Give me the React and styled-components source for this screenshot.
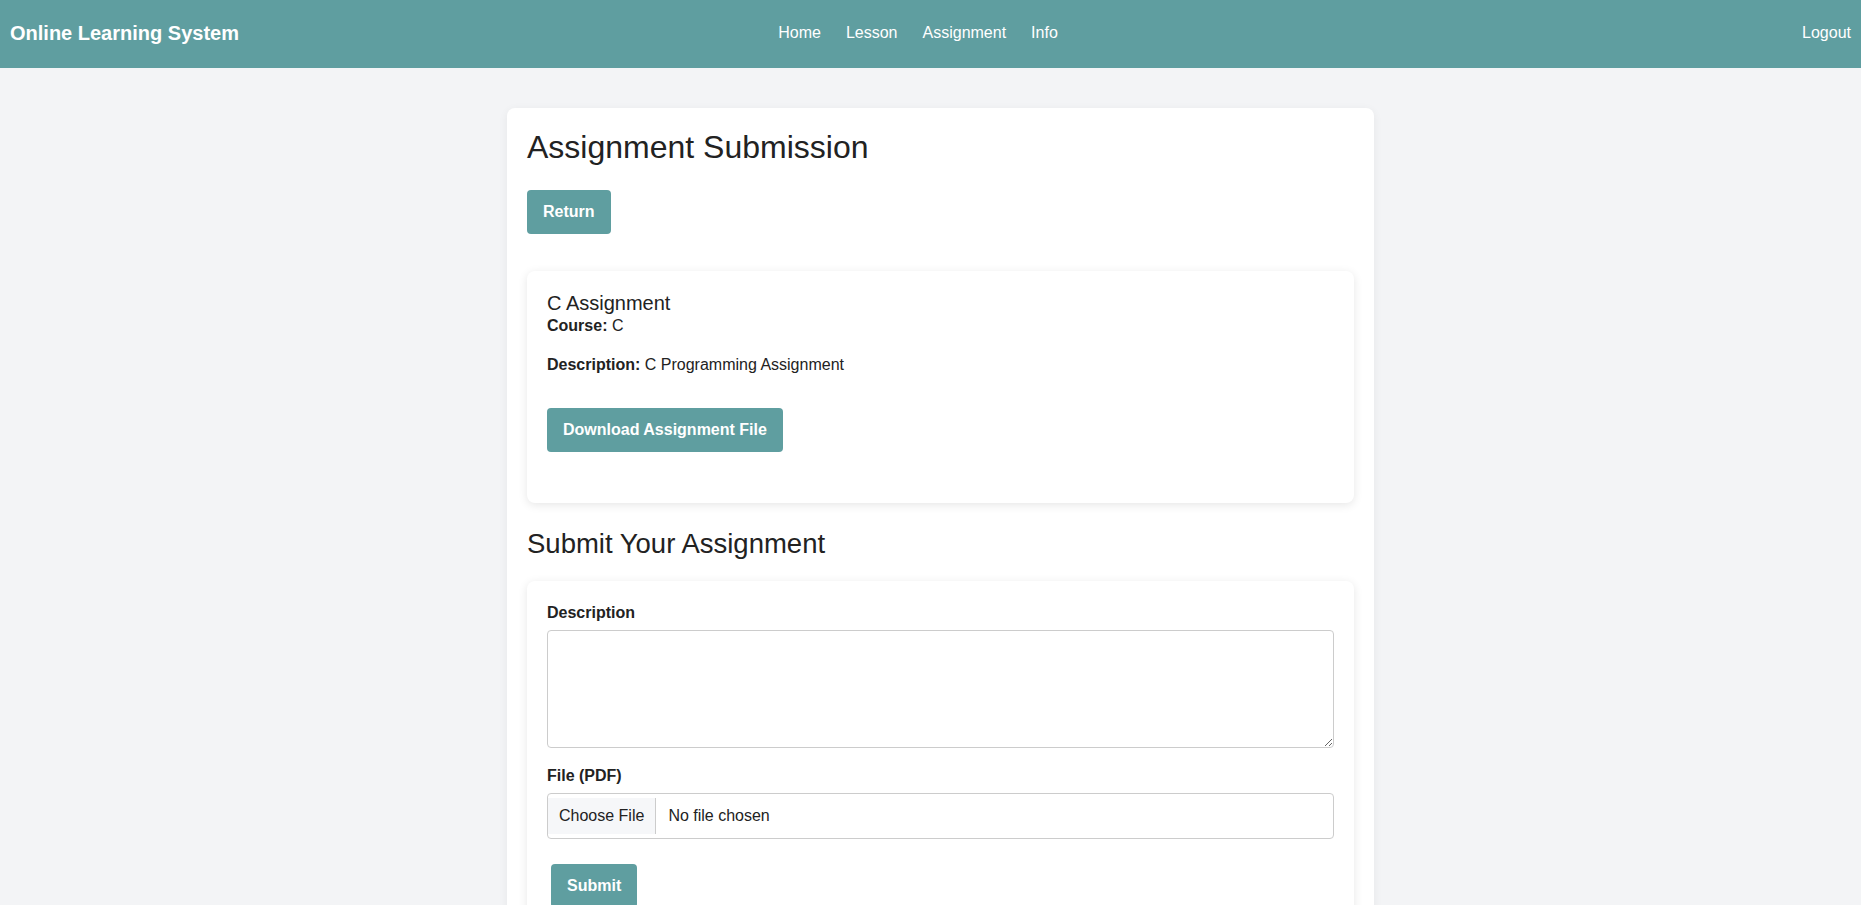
import React from 'react'
import styled, { createGlobalStyle } from 'styled-components'

const GlobalStyle = createGlobalStyle`
    * { box-sizing: border-box; }
    body {
        margin: 0;
        background: #f3f4f6;
        font-family: "Liberation Sans", Arial, sans-serif;
        color: #222;
    }
`

const App = () => {
    return (
        <>
            <GlobalStyle />
            <Navbar>
                <Brand>Online Learning System</Brand>
                <NavLinks>
                    <a href="#">Home</a>
                    <a href="#">Lesson</a>
                    <a href="#">Assignment</a>
                    <a href="#">Info</a>
                </NavLinks>
                <Logout href="#">Logout</Logout>
            </Navbar>

            <Page>
                <Card>
                    <Title>Assignment Submission</Title>
                    <Button>Return</Button>

                    <Panel>
                        <h3>C Assignment</h3>
                        <p><strong>Course:</strong> C</p>
                        <p className="desc"><strong>Description:</strong> C Programming Assignment</p>
                        <Button className="download">Download Assignment File</Button>
                    </Panel>

                    <SubTitle>Submit Your Assignment</SubTitle>

                    <Panel as="form" onSubmit={e => e.preventDefault()}>
                        <FormGroup>
                            <label htmlFor="desc">Description</label>
                            <textarea id="desc" />
                        </FormGroup>
                        <FormGroup>
                            <label htmlFor="file">File (PDF)</label>
                            <input id="file" type="file" accept="application/pdf" />
                        </FormGroup>
                        <Button type="submit" className="submit">Submit</Button>
                    </Panel>
                </Card>
            </Page>
        </>
    )
}

export default App

const Navbar = styled.nav`
    height: 68px;
    background-color: cadetblue;
    display: grid;
    grid-template-columns: 1fr auto 1fr;
    align-items: center;
    padding: 0 10px 2px;
    color: white;
`

const Brand = styled.div`
    font-size: 20px;
    font-weight: 700;
    justify-self: start;
`

const NavLinks = styled.div`
    display: flex;

    a{
        color: white;
        text-decoration: none;
        font-size: 16px;
        margin-right: 25px;
    }
`

const Logout = styled.a`
    justify-self: end;
    color: white;
    text-decoration: none;
    font-size: 16px;
`

const Page = styled.div`
    padding: 40px 0 40px 20px;
`

const Card = styled.div`
    width: 867px;
    margin: 0 auto;
    background: white;
    border-radius: 8px;
    padding: 21px 20px 20px;
    box-shadow: 0 2px 10px rgb(0 0 0 / .06);
`

const Title = styled.h1`
    font-size: 32px;
    font-weight: 400;
    margin: 0 0 24px;
    color: #222;
`

const Button = styled.button`
    display: inline-block;
    border: none;
    background-color: cadetblue;
    color: white;
    font-family: inherit;
    font-size: 16px;
    font-weight: 700;
    line-height: 18.4px;
    padding: 12.8px 16px;
    border-radius: 4px;
    cursor: pointer;

    &.download{
        margin: 32px 0 31px;
    }

    &.submit{
        margin: 9px 0 20px 4px;
    }
`

const Panel = styled.div`
    margin-top: 37px;
    background: white;
    border-radius: 8px;
    padding: 20px;
    box-shadow: 0 2px 10px rgb(0 0 0 / .1);

    h3{
        font-size: 20px;
        font-weight: 400;
        margin: 0;
        line-height: 24px;
    }

    p{
        margin: 0;
        font-size: 16px;
        line-height: 22px;
    }

    .desc{
        margin-top: 17px;
    }

    &:last-child{
        margin-top: 21px;
    }
`

const SubTitle = styled.h2`
    font-size: 27.5px;
    font-weight: 400;
    margin: 25px 0 0;
    line-height: 32px;
`

const FormGroup = styled.div`
    margin-bottom: 16px;

    label{
        display: block;
        font-weight: 700;
        font-size: 16px;
        line-height: 24px;
        margin-bottom: 5px;
    }

    textarea{
        display: block;
        width: 100%;
        height: 118px;
        border: 1px solid #ccc;
        border-radius: 4px;
        font-family: inherit;
        font-size: 16px;
        padding: 8px;
        resize: vertical;
    }

    input[type="file"]{
        display: block;
        width: 100%;
        border: 1px solid #ccc;
        border-radius: 4px;
        padding: 4px 0;
        font-family: "Liberation Sans", Arial, sans-serif;
        font-size: 16px;
        color: #222;
    }

    input[type="file"]::file-selector-button{
        font-family: inherit;
        font-size: 16px;
        color: #222;
        background: #f6f7f9;
        border: none;
        border-right: 1px solid #ccc;
        padding: 9px 11px;
        margin: 0 12px 0 0;
        line-height: 18.4px;
        cursor: pointer;
    }
`
